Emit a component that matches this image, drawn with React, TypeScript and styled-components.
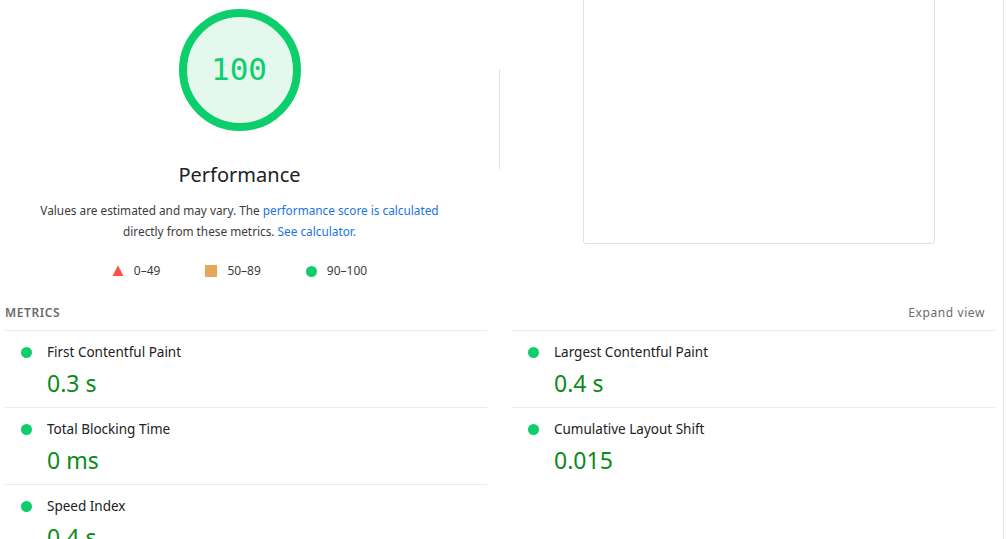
import styled, { createGlobalStyle } from "styled-components";

const GlobalStyle = createGlobalStyle`
  html, body {
    margin: 0;
    padding: 0;
    background: #ffffff;
    overflow: hidden;
  }
  body {
    font-family: "Noto Sans", "Open Sans", sans-serif;
    color: #212121;
  }
`;

type Metric = { label: string; value: string };

const metrics: Metric[] = [
  { label: "First Contentful Paint", value: "0.3 s" },
  { label: "Largest Contentful Paint", value: "0.4 s" },
  { label: "Total Blocking Time", value: "0 ms" },
  { label: "Cumulative Layout Shift", value: "0.015" },
  { label: "Speed Index", value: "0.4 s" },
];

// Lighthouse report, scrolled a little so the screenshot frame is cut at the top.
export default function App() {
  return (
    <Page>
      <GlobalStyle />
      <TopSection>
        <ScoreColumn>
          <Gauge width="128" height="128" viewBox="0 0 128 128">
            <circle cx="64" cy="64" r="57" fill="#e5f8ed" stroke="#0cce6b" strokeWidth="8" />
            <text
              x="63"
              y="65"
              textAnchor="middle"
              dominantBaseline="middle"
              fill="#0cce6b"
              fontFamily="'DejaVu Sans Mono', 'Liberation Mono', monospace"
              fontSize="31"
            >
              100
            </text>
          </Gauge>
          <ScoreTitle>Performance</ScoreTitle>
          <Description>
            Values are estimated and may vary. The <Link>performance score is calculated</Link>
            <br />
            directly from these metrics. <Link>See calculator.</Link>
          </Description>
          <Legend>
            <LegendItem>
              <svg width="12" height="12" viewBox="0 0 12 12">
                <polygon points="6,0.5 11.5,11 0.5,11" fill="#ff4e42" />
              </svg>
              <span>0–49</span>
            </LegendItem>
            <LegendItem>
              <Square />
              <span>50–89</span>
            </LegendItem>
            <LegendItem>
              <Dot />
              <span>90–100</span>
            </LegendItem>
          </Legend>
        </ScoreColumn>
        <Divider />
        <ScreenshotFrame />
      </TopSection>

      <MetricsSection>
        <MetricsHeader>
          <HeaderTitle>Metrics</HeaderTitle>
          <ExpandToggle>Expand view</ExpandToggle>
        </MetricsHeader>
        <MetricsGrid>
          {metrics.map((m) => (
            <MetricRow key={m.label}>
              <Dot />
              <MetricBody>
                <MetricLabel>{m.label}</MetricLabel>
                <MetricValue>{m.value}</MetricValue>
              </MetricBody>
            </MetricRow>
          ))}
        </MetricsGrid>
      </MetricsSection>
    </Page>
  );
}

const Page = styled.div`
  width: 1003px;
  height: 539px;
  border-right: 1px solid #e6e6e6;
  overflow: hidden;
`;

const TopSection = styled.div`
  display: flex;
  flex-direction: row;
  height: 295px;
`;

const ScoreColumn = styled.div`
  display: flex;
  flex-direction: column;
  align-items: center;
  width: 479px;
  padding-top: 6px;
`;

const Gauge = styled.svg`
  display: block;
`;

const ScoreTitle = styled.div`
  margin-top: 29px;
  font-size: 20px;
  line-height: 24px;
  color: #212121;
`;

const Description = styled.div`
  margin-top: 13px;
  font-size: 11.8px;
  line-height: 21px;
  text-align: center;
  color: #3c3c3c;
`;

const Link = styled.span`
  color: #1a73e8;
`;

const Legend = styled.div`
  display: flex;
  flex-direction: row;
  align-items: center;
  gap: 45px;
  margin-top: 21px;
  font-size: 12px;
  line-height: 16px;
  color: #3c3c3c;
`;

const LegendItem = styled.div`
  display: flex;
  align-items: center;
  gap: 10px;
`;

const Square = styled.div`
  width: 12px;
  height: 12px;
  background: #e8a658;
`;

const Dot = styled.div`
  flex: none;
  width: 11px;
  height: 11px;
  border-radius: 50%;
  background: #0cce6b;
`;

const Divider = styled.div`
  width: 1px;
  height: 100px;
  margin-top: 69px;
  margin-left: 20px;
  background: #e0e0e0;
`;

const ScreenshotFrame = styled.div`
  width: 350px;
  height: 252px;
  margin-top: -10px;
  margin-left: 83px;
  border: 1px solid #e0e0e0;
  border-radius: 3px;
`;

const MetricsSection = styled.div`
  padding: 0 8px 0 5px;
`;

const MetricsHeader = styled.div`
  display: flex;
  justify-content: space-between;
  align-items: center;
  height: 35px;
`;

const HeaderTitle = styled.div`
  font-size: 12px;
  font-weight: 600;
  letter-spacing: 0.6px;
  text-transform: uppercase;
  color: #6b6b6b;
`;

const ExpandToggle = styled.div`
  margin-right: 10px;
  font-size: 12px;
  letter-spacing: 0.6px;
  color: #6b6b6b;
`;

const MetricsGrid = styled.div`
  display: grid;
  grid-template-columns: 482px 483px;
  column-gap: 25px;
`;

const MetricRow = styled.div`
  display: flex;
  flex-direction: row;
  align-items: flex-start;
  gap: 15px;
  padding: 11px 0 0 16px;
  border-top: 1px solid #ebebeb;
  box-sizing: border-box;
  height: 77px;

  & > ${Dot} {
    margin-top: 5px;
  }
`;

const MetricBody = styled.div`
  display: flex;
  flex-direction: column;
  gap: 6px;
`;

const MetricLabel = styled.div`
  font-size: 13.5px;
  line-height: 20px;
  color: #212121;
`;

const MetricValue = styled.div`
  font-size: 23px;
  line-height: 30px;
  color: #0a8a1a;
`;
